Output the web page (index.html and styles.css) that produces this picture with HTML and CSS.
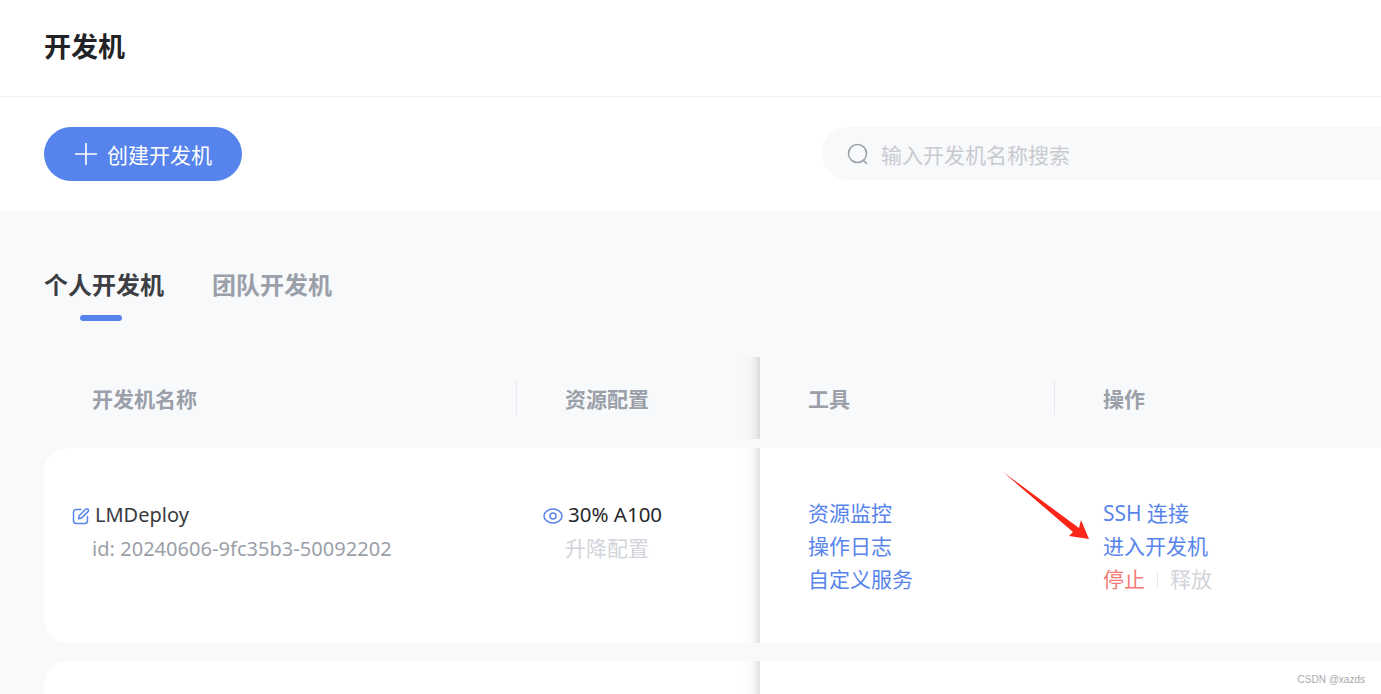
FILE: index.html
```html
<!DOCTYPE html>
<html lang="zh-CN">
<head>
<meta charset="utf-8">
<title>开发机</title>
<link rel="stylesheet" href="styles.css">
</head>
<body>
<div class="page">
  <header class="title-bar"><h1 class="title">开发机</h1></header>
  <section class="toolbar">
    <button class="create-btn">
      <svg class="plus-icon" viewBox="0 0 22 22" width="22" height="22"><path d="M11 0v22M0 11h22" fill="none" stroke="#fff" stroke-width="1.6"/></svg>
      <span>创建开发机</span>
    </button>
    <div class="search">
      <svg class="search-icon" viewBox="0 0 22 22" width="22" height="22"><circle cx="10.5" cy="10.5" r="9" fill="none" stroke="#9a9fa9" stroke-width="1.5"/><path d="M16.5 17.5l3 3" fill="none" stroke="#9a9fa9" stroke-width="1.5" stroke-linecap="round"/></svg>
      <span class="placeholder">输入开发机名称搜索</span>
    </div>
  </section>
  <main class="content">
    <nav class="tabs">
      <div class="tab tab-active">个人开发机</div>
      <div class="tab">团队开发机</div>
    </nav>
    <div class="table-head">
      <div class="col col-name"><span class="head-text">开发机名称</span></div>
      <div class="col col-res fixed-edge"><span class="head-text">资源配置</span></div>
      <div class="col col-tools"><span class="head-text">工具</span></div>
      <div class="col col-ops"><span class="head-text">操作</span></div>
    </div>
    <div class="row">
      <div class="cell col-name">
        <div class="name-line">
          <svg class="edit-icon" viewBox="0 0 18 18" width="18" height="18"><path d="M9 2.5H4.2A2.7 2.7 0 0 0 1.5 5.2v8.6a2.7 2.7 0 0 0 2.7 2.7h8.6a2.7 2.7 0 0 0 2.7-2.7V9.5" fill="none" stroke="#5784ec" stroke-width="1.5" stroke-linecap="round"/><path d="M6.5 11.8l.6-3L13.6 2.2a1.6 1.6 0 0 1 2.3 0l.1.1a1.6 1.6 0 0 1 0 2.3L9.5 11.1z" fill="none" stroke="#5784ec" stroke-width="1.5" stroke-linejoin="round"/></svg>
          <span>LMDeploy</span>
        </div>
        <div class="id-line">id: 20240606-9fc35b3-50092202</div>
      </div>
      <div class="cell col-res fixed-edge">
        <div class="res-line">
          <svg class="eye-icon" viewBox="0 0 20 16" width="20" height="16"><ellipse cx="10" cy="8" rx="9" ry="7" fill="none" stroke="#5784ec" stroke-width="1.5"/><circle cx="10" cy="8" r="3" fill="none" stroke="#5784ec" stroke-width="1.5"/></svg>
          <span>30% A100</span>
        </div>
        <div class="muted-line">升降配置</div>
      </div>
      <div class="cell col-tools">
        <a class="link">资源监控</a>
        <a class="link">操作日志</a>
        <a class="link">自定义服务</a>
      </div>
      <div class="cell col-ops">
        <a class="link">SSH 连接</a>
        <a class="link">进入开发机</a>
        <div class="op-line">
          <a class="danger">停止</a>
          <span class="op-sep"></span>
          <span class="disabled">释放</span>
        </div>
      </div>
    </div>
    <div class="row">
      <div class="cell col-name"></div>
      <div class="cell col-res fixed-edge"></div>
      <div class="cell col-tools"></div>
      <div class="cell col-ops"></div>
    </div>
  </main>
  <svg class="arrow" viewBox="0 0 100 80" width="100" height="80"><path d="M3 2L79 58L81 50L89 69L69 66L73 62Z" fill="#fb2518"/></svg>
  <div class="watermark">CSDN @xazds</div>
</div>
</body>
</html>
```
FILE: styles.css
```css
* { box-sizing: border-box; }
html, body { margin: 0; padding: 0; }
body {
  font-family: "Noto Sans", "Noto Sans CJK SC", sans-serif;
  color: #2b2b2f;
  background: #fff;
}
.page {
  position: relative;
  width: 1381px;
  height: 694px;
  overflow: hidden;
  background: #fff;
}
.title-bar {
  height: 97px;
  padding: 29px 44px 0;
  border-bottom: 1px solid #f1f2f5;
}
.title {
  margin: 0;
  font-size: 27px;
  line-height: 36px;
  font-weight: 700;
  color: #222326;
}
.toolbar {
  display: flex;
  align-items: flex-start;
  height: 114px;
  padding: 30px 0 0 44px;
}
.create-btn {
  display: flex;
  align-items: center;
  flex: none;
  width: 198px;
  height: 54px;
  padding: 0 0 0 31px;
  gap: 10px;
  border: 0;
  border-radius: 27px;
  background: #5784ec;
  color: #fff;
  font: inherit;
  font-size: 21px;
}
.plus-icon { flex: none; }
.search {
  display: flex;
  align-items: center;
  flex: none;
  width: 640px;
  height: 53px;
  margin-left: 580px;
  padding-left: 25px;
  gap: 12px;
  border-radius: 26px;
  background: #f8f9fb;
}
.placeholder {
  font-size: 21px;
  color: #c8cad0;
}
.content {
  height: 483px;
  background: #f8f9fb;
  padding: 54px 0 0 44px;
}
.tabs {
  display: flex;
  gap: 48px;
  height: 92px;
}
.tab {
  position: relative;
  font-size: 24px;
  line-height: 40px;
  font-weight: 700;
  color: #9a9fa9;
}
.tab-active { color: #3c3e44; }
.tab-active::after {
  content: "";
  position: absolute;
  left: 36px;
  top: 50px;
  width: 42px;
  height: 6px;
  border-radius: 3px;
  background: #5784ec;
}
.table-head {
  display: flex;
  height: 82px;
  margin-bottom: 9px;
}
.col-name { width: 472px; flex: none; padding-left: 48px; }
.col-res { width: 244px; flex: none; padding-left: 49px; }
.col-tools { width: 294px; flex: none; padding-left: 48px; }
.col-ops { flex: 1; padding-left: 49px; }
.col {
  position: relative;
  display: flex;
  align-items: center;
}
.head-text {
  font-size: 21px;
  font-weight: 700;
  color: #9a9fa9;
}
.col-res.col::before, .col-ops.col::before {
  content: "";
  position: absolute;
  left: 0;
  top: 24px;
  width: 1px;
  height: 34px;
  background: #e8e9ec;
}
.fixed-edge { position: relative; }
.fixed-edge::after {
  content: "";
  position: absolute;
  right: 0;
  top: 0;
  bottom: 0;
  width: 20px;
  background: linear-gradient(to right, rgba(0,0,0,0), rgba(0,0,0,0.012) 40%, rgba(0,0,0,0.04) 70%, rgba(0,0,0,0.12));
}
.row {
  display: flex;
  height: 195px;
  margin-bottom: 18px;
}
.cell {
  display: flex;
  flex-direction: column;
  background: #fff;
  padding-top: 48px;
  font-size: 21px;
  line-height: 33px;
}
.row .col-name { border-radius: 24px 0 0 24px; }
.name-line {
  display: flex;
  align-items: center;
  gap: 5px;
  margin-left: -20px;
  height: 36px;
  font-size: 20px;
  color: #3a3b40;
}
.edit-icon { flex: none; margin-top: 3px; }
.id-line {
  font-size: 20px;
  letter-spacing: 0.04px;
  color: #9a9fa9;
}
.res-line {
  display: flex;
  align-items: center;
  gap: 5px;
  margin-left: -22px;
  height: 36px;
  font-size: 20.5px;
  color: #26272b;
}
.eye-icon { flex: none; margin-top: 4px; }
.muted-line { color: #d2d4da; }
.cell.col-tools, .cell.col-ops { padding-top: 49px; }
.link { display: block; color: #5784ec; }
.op-line { display: flex; align-items: center; }
.danger { color: #f37a76; }
.op-sep {
  width: 1px;
  height: 16px;
  margin: 0 12px;
  background: #e8e9ec;
}
.disabled { color: #d2d4da; }
.arrow {
  position: absolute;
  left: 1000px;
  top: 470px;
}
.watermark {
  position: absolute;
  right: 16px;
  top: 672px;
  font-family: "Liberation Sans", sans-serif;
  font-size: 10px;
  line-height: 16px;
  color: #a9a9a9;
}
```
